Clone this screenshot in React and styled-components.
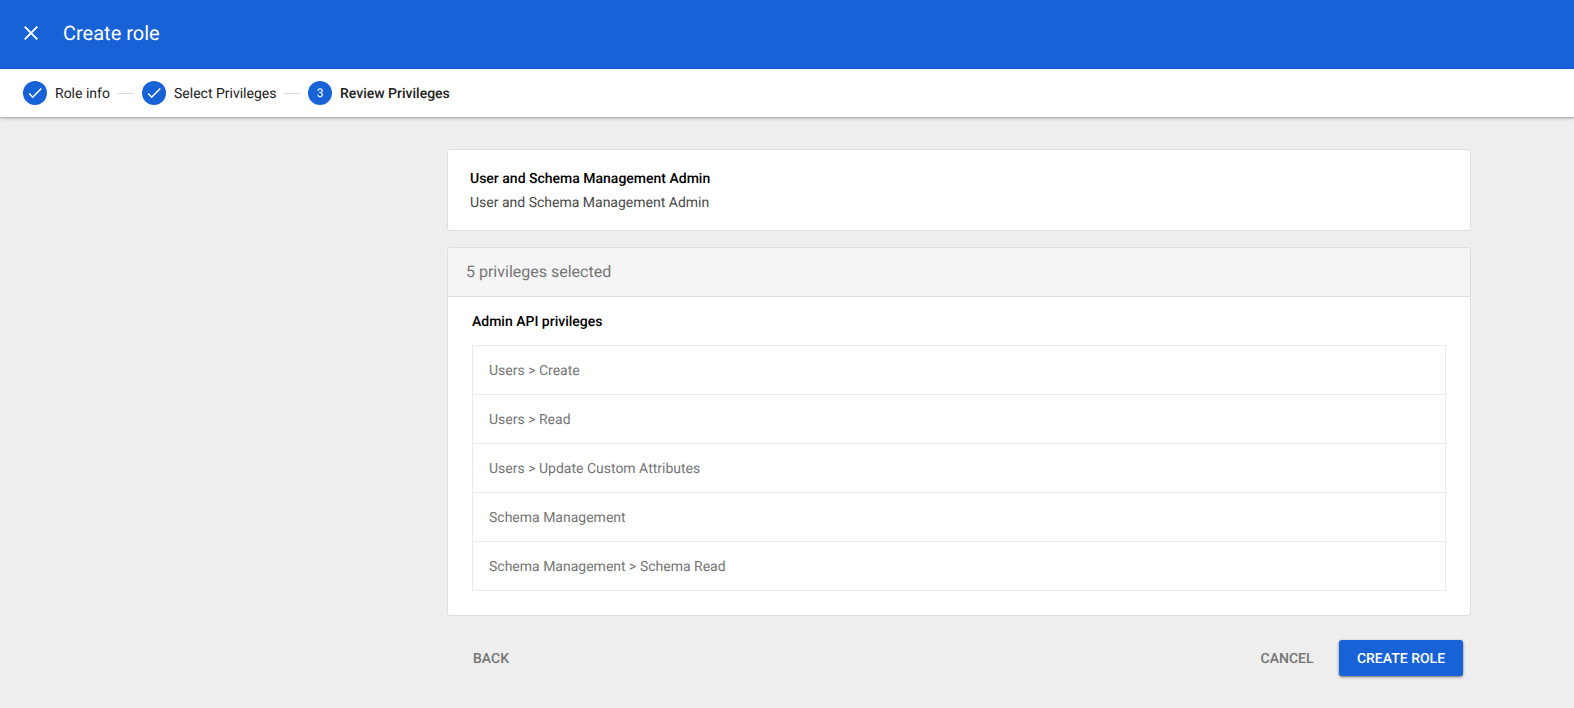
import React from 'react';
import styled, { createGlobalStyle } from 'styled-components';

const Global = createGlobalStyle`
  *, *::before, *::after { box-sizing: border-box; }
  body {
    margin: 0;
    min-height: 100vh;
    background: #eeeeee;
    font-family: Roboto, "Liberation Sans", sans-serif;
    font-size: 14px;
    line-height: 20px;
    text-rendering: geometricPrecision;
  }
`;

const Header = styled.header`
  display: flex;
  align-items: center;
  height: 69px;
  padding: 0 19px 3px;
  background: #1862d8;
  color: #fff;
`;

const CloseButton = styled.button`
  display: flex;
  padding: 0;
  border: 0;
  background: none;
  color: inherit;
`;

const Title = styled.h1`
  margin: 0 0 0 20px;
  font-size: 20px;
  line-height: 28px;
  font-weight: 400;
`;

const Stepper = styled.nav`
  display: flex;
  align-items: center;
  gap: 8px;
  height: 48px;
  padding-left: 23px;
  background: #fff;
  box-shadow: 0 1px 1px rgba(0, 0, 0, 0.12), 0 1px 4px rgba(0, 0, 0, 0.24);
`;

const StepBadge = styled.span`
  display: flex;
  align-items: center;
  justify-content: center;
  width: 24px;
  height: 24px;
  border-radius: 50%;
  background: #1862d8;
  color: #fff;
  font-size: 12px;
`;

const StepLabel = styled.span`
  width: ${(p) => p.$width}px;
  padding-top: 2px;
  white-space: nowrap;
  color: #212121;
  font-weight: ${(p) => (p.$active ? 500 : 400)};
`;

const StepLine = styled.span`
  width: 16px;
  height: 1px;
  background: #dadada;
`;

const Content = styled.main`
  width: 1024px;
  margin: 32px 0 0 447px;
`;

const Card = styled.section`
  border: 1px solid #dfdfdf;
  border-radius: 3px;
  background: #fff;
  overflow: hidden;
`;

const RoleCard = styled(Card)`
  height: 82px;
  padding: 17px 22px 15px;
  margin-bottom: 16px;
`;

const RoleName = styled.h2`
  margin: 0;
  color: #000;
  font-size: 14px;
  line-height: 24px;
  font-weight: 500;
`;

const RoleDescription = styled.p`
  margin: 0;
  color: #484848;
  line-height: 24px;
`;

const CardHeader = styled.div`
  height: 49px;
  padding: 0 18px;
  border-bottom: 1px solid #dfdfdf;
  background: #f5f5f5;
  color: #757575;
  font-size: 16px;
  line-height: 47px;
`;

const CardBody = styled.div`
  padding: 0 24px 24px;
`;

const GroupTitle = styled.h3`
  height: 48px;
  margin: 0;
  color: #000;
  font-size: 14px;
  line-height: 50px;
  font-weight: 500;
`;

const PrivilegeList = styled.ul`
  margin: 0;
  padding: 0;
  list-style: none;
  border: 1px solid #ebebeb;
`;

const Privilege = styled.li`
  height: 49px;
  padding-left: 16px;
  border-bottom: 1px solid #ebebeb;
  color: #757575;
  line-height: 50px;

  &:last-child {
    height: 48px;
    border-bottom: 0;
  }
`;

const Actions = styled.div`
  display: flex;
  align-items: center;
  margin-top: 24px;
  padding: 0 8px 0 10px;
`;

const Button = styled.button`
  height: 36px;
  padding: 2px 16px 0;
  border: 0;
  border-radius: 3px;
  background: none;
  color: #757575;
  font: 500 14px/34px Roboto, "Liberation Sans", sans-serif;
  text-transform: uppercase;
  text-rendering: inherit;
  white-space: nowrap;
`;

const BackButton = styled(Button)`
  margin-right: auto;
`;

const CancelButton = styled(Button)`
  margin-right: 9.5px;
`;

const PrimaryButton = styled(Button)`
  width: 124px;
  background: #1862d8;
  color: #fff;
  box-shadow: 0 1px 3px rgba(0, 0, 0, 0.35), 0 1px 2px rgba(0, 0, 0, 0.25);
`;

const CheckIcon = () => (
  <svg width="24" height="24" viewBox="0 0 24 24">
    <path d="M6.2 12.6l3.5 3.6 8.6-8.8" fill="none" stroke="#fff" strokeWidth="1.5" />
  </svg>
);

const CloseIcon = () => (
  <svg width="24" height="24" viewBox="0 0 24 24">
    <path d="M5.7 5.7l12.6 12.6M18.3 5.7L5.7 18.3" stroke="currentColor" strokeWidth="1.9" />
  </svg>
);

const steps = [
  { label: 'Role info', width: 55, done: true },
  { label: 'Select Privileges', width: 102, done: true },
  { label: 'Review Privileges', width: 110, active: true },
];

const privileges = [
  'Users > Create',
  'Users > Read',
  'Users > Update Custom Attributes',
  'Schema Management',
  'Schema Management > Schema Read',
];

export default function App() {
  return (
    <>
      <Global />
      <Header>
        <CloseButton aria-label="Close"><CloseIcon /></CloseButton>
        <Title>Create role</Title>
      </Header>
      <Stepper>
        {steps.map((step, i) => (
          <React.Fragment key={step.label}>
            {i > 0 && <StepLine />}
            <StepBadge>{step.done ? <CheckIcon /> : i + 1}</StepBadge>
            <StepLabel $active={step.active} $width={step.width}>{step.label}</StepLabel>
          </React.Fragment>
        ))}
      </Stepper>
      <Content>
        <RoleCard>
          <RoleName>User and Schema Management Admin</RoleName>
          <RoleDescription>User and Schema Management Admin</RoleDescription>
        </RoleCard>
        <Card>
          <CardHeader>5 privileges selected</CardHeader>
          <CardBody>
            <GroupTitle>Admin API privileges</GroupTitle>
            <PrivilegeList>
              {privileges.map((name) => <Privilege key={name}>{name}</Privilege>)}
            </PrivilegeList>
          </CardBody>
        </Card>
        <Actions>
          <BackButton>Back</BackButton>
          <CancelButton>Cancel</CancelButton>
          <PrimaryButton>Create role</PrimaryButton>
        </Actions>
      </Content>
    </>
  );
}
